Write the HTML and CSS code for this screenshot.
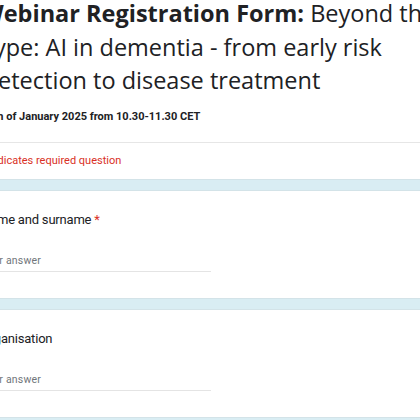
FILE: index.html
```html
<!DOCTYPE html>
<html>
<head>
<meta charset="utf-8">
<link rel="stylesheet" href="styles.css">
</head>
<body>
<div class="page">
  <section class="card header">
    <h1 class="title"><span class="strong">Webinar Registration Form:</span> Beyond the<br>Type: AI in dementia - from early risk<br>Detection to disease treatment</h1>
    <p class="date">30th of January 2025 from 10.30-11.30 CET</p>
    <div class="divider"></div>
    <p class="required">* Indicates required question</p>
  </section>
  <section class="card question">
    <div class="q-title">Name and surname <span class="star">*</span></div>
    <div class="answer">Your answer</div>
  </section>
  <section class="card question">
    <div class="q-title">Organisation</div>
    <div class="answer">Your answer</div>
  </section>
  <section class="card question">
    <div class="q-title">Email</div>
  </section>
</div>
</body>
</html>
```
FILE: styles.css
```css
html, body {
  margin: 0;
  padding: 0;
}
body {
  background: #d9edf3;
  overflow: hidden;
  width: 420px;
  height: 420px;
}
.page {
  margin-left: -41px;
  margin-top: -14px;
  width: 780px;
  display: flex;
  flex-direction: column;
  gap: 10px;
}
.card {
  background: #fff;
  border: 1px solid #d3e3e8;
  border-radius: 8px;
  padding: 0 21px;
}
.header {
  padding-top: 10px;
  padding-bottom: 0;
}
.title {
  margin: 0;
  font-family: "Open Sans", sans-serif;
  font-weight: 400;
  font-size: 23.5px;
  line-height: 33.5px;
  color: #202124;
  white-space: nowrap;
}
.strong {
  font-weight: 700;
}
.date {
  margin: 11px 0 0;
  font-family: Roboto, sans-serif;
  font-weight: 700;
  font-size: 11px;
  line-height: 16px;
  color: #202124;
}
.divider {
  height: 1px;
  background: #e6e6e6;
  margin: 17px -21px 0;
}
.required {
  margin: 0;
  font-family: Roboto, sans-serif;
  font-size: 11px;
  line-height: 36px;
  color: #d93025;
}
.question {
  padding-top: 19px;
  padding-bottom: 26px;
}
.q-title {
  font-family: Roboto, sans-serif;
  font-size: 13px;
  line-height: 20px;
  color: #202124;
  letter-spacing: -0.2px;
}
.star {
  color: #d93025;
}
.answer {
  margin-top: 24px;
  width: 230px;
  font-family: Roboto, sans-serif;
  font-size: 10.5px;
  line-height: 14px;
  color: #70757a;
  letter-spacing: 0.2px;
  padding-bottom: 3px;
  border-bottom: 1px solid #e4e4e4;
}
```
